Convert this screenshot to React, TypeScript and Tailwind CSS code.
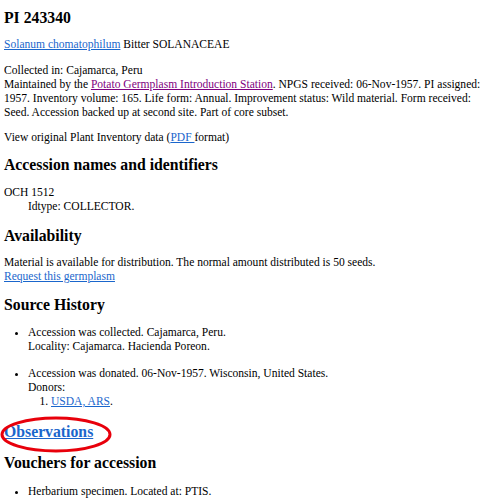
const link = 'text-[#1a66cc] underline';
const heading = 'text-[15.75px] font-bold leading-[19px]';

export default function App() {
  return (
    <div className="min-h-[500px] bg-white pl-[4px] pr-[10px] pt-[8px] font-['Liberation_Serif',serif] text-[11.55px] leading-[14px] text-black">
      <h1 className={heading}>PI 243340</h1>
      <p className="mt-[10px]">
        <a className={link}>Solanum chomatophilum</a> Bitter SOLANACEAE
      </p>
      <p className="mt-[12px]">
        Collected in: Cajamarca, Peru
        <br />
        Maintained by the <a className="text-[#800080] underline">Potato Germplasm Introduction Station</a>. NPGS
        received: 06-Nov-1957. PI assigned: 1957. Inventory volume: 165. Life form: Annual. Improvement status:
        Wild material. Form received: Seed. Accession backed up at second site. Part of core subset.
      </p>
      <p className="mt-[11px]">
        View original Plant Inventory data (<a className={link}>PDF </a>format)
      </p>

      <h2 className={`mt-[11px] ${heading}`}>Accession names and identifiers</h2>
      <div className="mt-[11px]">
        <div>OCH 1512</div>
        <div className="pl-[24px]">Idtype: COLLECTOR.</div>
      </div>

      <h2 className={`mt-[13px] ${heading}`}>Availability</h2>
      <p className="mt-[10px]">
        Material is available for distribution. The normal amount distributed is 50 seeds.
        <br />
        <a className={link}>Request this germplasm</a>
      </p>

      <h2 className={`mt-[12px] ${heading}`}>Source History</h2>
      <ul className="mt-[11px] list-disc pl-[24px]">
        <li>
          Accession was collected. Cajamarca, Peru.
          <br />
          Locality: Cajamarca. Hacienda Poreon.
        </li>
        <li className="mt-[13px]">
          Accession was donated. 06-Nov-1957. Wisconsin, United States.
          <br />
          Donors:
          <ol className="list-decimal pl-[23px]">
            <li>
              <a className={link}>USDA, ARS</a>.
            </li>
          </ol>
        </li>
      </ul>

      <div className="relative mt-[14px]">
        <h2 className={heading}>
          <a className={link}>Observations</a>
        </h2>
        <svg className="absolute left-[-4px] top-[-6px]" width="114" height="38" viewBox="0 0 114 38">
          <ellipse cx="56" cy="18.5" rx="54" ry="16.5" fill="none" stroke="#e8000b" strokeWidth="3" />
        </svg>
      </div>

      <h2 className={`mt-[12px] ${heading}`}>Vouchers for accession</h2>
      <ul className="mt-[12px] list-disc pl-[24px]">
        <li>Herbarium specimen. Located at: PTIS.</li>
      </ul>
    </div>
  );
}
